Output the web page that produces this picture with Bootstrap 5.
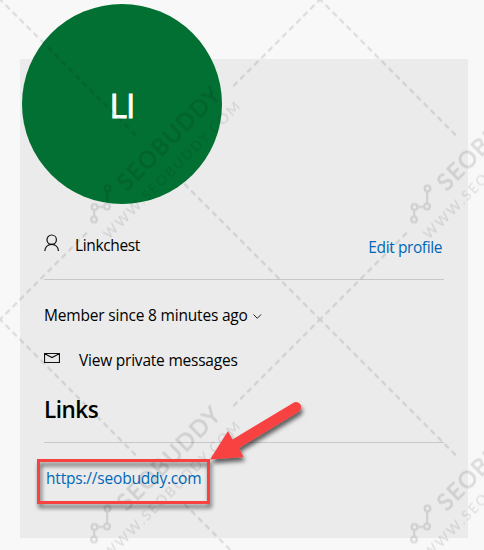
<!DOCTYPE html>
<html lang="en">
<head>
<meta charset="utf-8">
<meta name="viewport" content="width=device-width, initial-scale=1">
<title>Profile</title>
<link href="https://cdn.jsdelivr.net/npm/bootstrap@5.3.0/dist/css/bootstrap.min.css" rel="stylesheet">
<style>
  body { background: #f8f8f8; color: #000; font-family: "Segoe UI", "Open Sans", "Noto Sans", sans-serif; font-size: 15.5px; line-height: 24px; height: 550px; overflow: hidden; }
  .page-wrap { height: 550px; padding: 59px 16px 0 20px; }
  .profile-panel { display: flow-root; background: #ebebeb; height: 479px; padding: 0 24px; }
  .avatar { width: 200px; height: 200px; margin: -55px 0 0 -22px; padding-top: 1px; background: #027032; color: #fff; font-size: 33.5px; letter-spacing: -.8px; -webkit-text-stroke: .9px #fff; }
  .name-row { height: 76px; padding-top: 29px; border-bottom: 1px solid #c8c8c8; }
  .name-icon { margin: 1px 15px 0 0; }
  .t-name { letter-spacing: -.35px; }
  .t-edit { letter-spacing: -.4px; padding: 2px 2px 0 0; }
  .t-edit a, .t-url a { color: #0067b8; }
  .member-row { margin-top: 23px; letter-spacing: -.19px; }
  .message-row { margin-top: 21px; letter-spacing: -.22px; }
  .message-icon { margin: 4px 19px 0 0; }
  .links-title { font-size: 22.5px; line-height: 30px; font-weight: 600; letter-spacing: -.5px; margin: 23px 0 0; padding-bottom: 17px; border-bottom: 1px solid #c8c8c8; }
  .t-url { padding: 23px 0 0 2px; letter-spacing: -.19px; }
  .overlay { position: absolute; left: 0; top: 0; pointer-events: none; }
  .wm-text { font-family: Lato, sans-serif; }
</style>
</head>
<body>
<main class="page-wrap position-relative">
  <section class="profile-panel">
    <div class="avatar rounded-circle d-flex align-items-center justify-content-center">LI</div>
    <div class="name-row d-flex align-items-start">
      <svg class="name-icon" width="16" height="18" viewBox="0 0 16 18" fill="none" stroke="#111" stroke-width="1.2"><circle cx="7.700" cy="5.700" r="4.700"/><path d="M.8 17c.3-4 3.200-6.600 6.900-6.600s6.500 2.600 6.800 6.600"/></svg>
      <span class="t-name">Linkchest</span>
      <span class="t-edit ms-auto"><a href="#" class="text-decoration-none">Edit profile</a></span>
    </div>
    <div class="member-row d-flex align-items-center">
      <span>Member since 8 minutes ago</span>
      <svg class="ms-1 mt-1" width="10" height="8" viewBox="0 0 10 8" fill="none" stroke="#222" stroke-width="1"><path d="M1.500 1.500 5.300 5.300 9.100 1.500"/></svg>
    </div>
    <div class="message-row d-flex align-items-start">
      <svg class="message-icon flex-shrink-0" width="16" height="12" viewBox="0 0 16 12" fill="none" stroke="#111" stroke-width="1.200"><path d="M.5 1.500H15.500V10.500H.5ZM.8 1.800 8 5.500l7.200-3.700"/></svg>
      <span>View private messages</span>
    </div>
    <h2 class="links-title">Links</h2>
    <div class="t-url"><a href="#" class="text-decoration-none">https://seobuddy.com</a></div>
  </section>

  <!-- Repeating watermark -->
  <svg class="overlay" width="484" height="550">
    <defs>
      <pattern id="wm" width="320" height="320" y="-.5" patternUnits="userSpaceOnUse">
        <g stroke="#000" fill="none" stroke-width="2.200" stroke-dasharray="6 3.900" stroke-dashoffset="2">
          <path d="M0 0 138 138M320 320 184 184M320 0 232 88M0 320 88 232"/>
        </g>
        <g stroke="#000" fill="none" stroke-width="2.200">
          <circle cx="94" cy="220" r="2.900"/><circle cx="94.500" cy="207.500" r="2.900"/><circle cx="107" cy="207" r="2.900"/><circle cx="107.500" cy="189" r="2.900"/>
          <path d="M94.200 217V210.500M97.500 207.300H104M107.200 204V192"/>
        </g>
        <g class="wm-text">
          <text transform="translate(126.500 192.500) rotate(-45)" font-size="23" textLength="135" stroke="#000" stroke-width=".8">SEOBUDDY</text>
          <text transform="translate(109 240.300) rotate(-45)" font-size="14" textLength="187">WWW.SEOBUDDY.COM</text>
        </g>
      </pattern>
    </defs>
    <rect width="484" height="550" fill="url(#wm)" opacity=".115"/>
  </svg>

  <!-- Red callout box and arrow -->
  <svg class="overlay" width="484" height="550">
    <defs><filter id="sh" x="-20%" y="-20%" width="140%" height="150%"><feDropShadow dx="1.500" dy="4" stdDeviation="2.200" flood-color="#000" flood-opacity=".6"/></filter></defs>
    <rect x="38.500" y="460.500" width="170" height="42" fill="none" stroke="#f84242" stroke-width="3" filter="url(#sh)"/>
    <path d="M210 459.500 228 431 232.500 439.500 293.500 402.700A5.200 5.200 0 0 1 299 411.500L239 448 243.500 457Z" fill="#f84242" filter="url(#sh)"/>
  </svg>
</main>
<script src="https://cdn.jsdelivr.net/npm/bootstrap@5.3.0/dist/js/bootstrap.bundle.min.js"></script>
</body>
</html>
